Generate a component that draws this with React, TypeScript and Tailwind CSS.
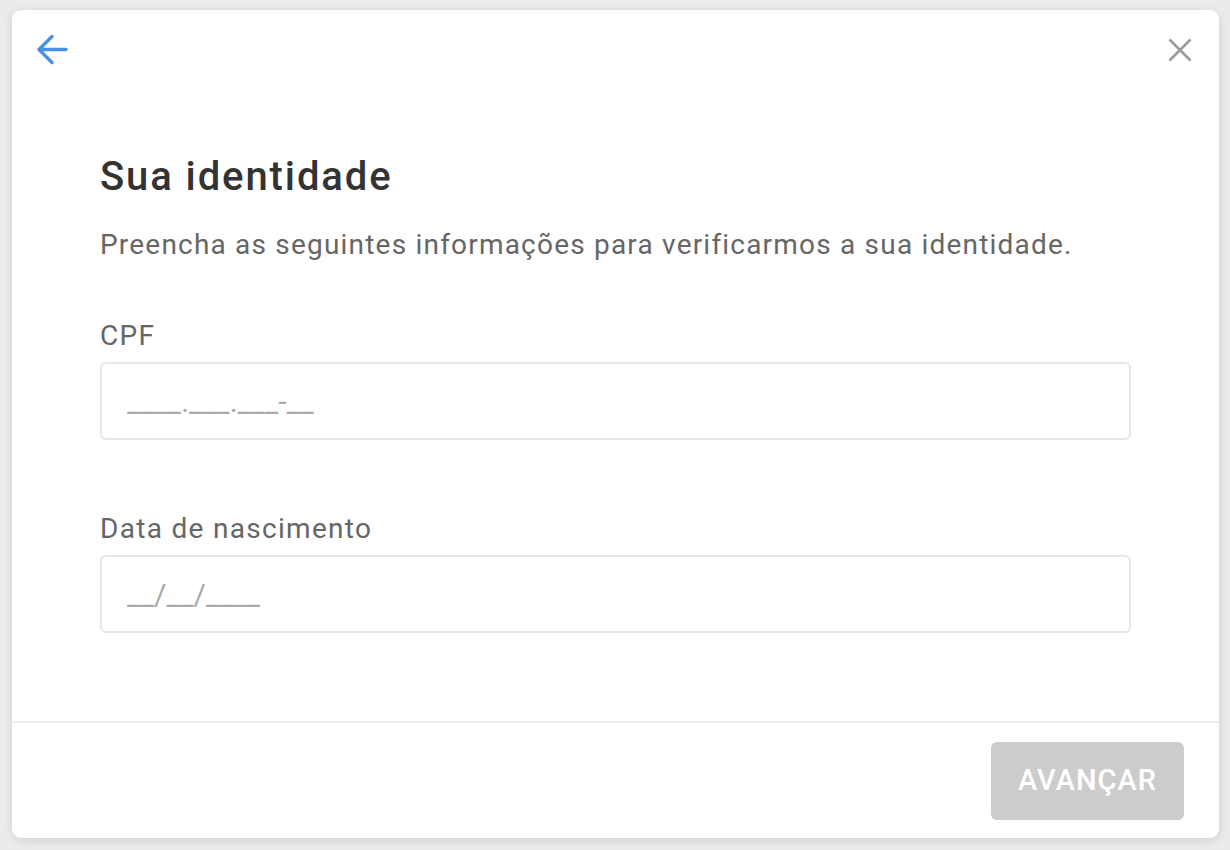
const fields = [
  { label: "CPF", placeholder: "____.___.___-__" },
  { label: "Data de nascimento", placeholder: "__/__/____" },
];

const BackArrow = () => (
  <svg width="32" height="30" viewBox="0 0 32 30" fill="none">
    <path
      d="M3 14.5H30M16 1.5L3 14.5L16 27.5"
      stroke="#4a90e2"
      strokeWidth="3.4"
      strokeLinecap="round"
      strokeLinejoin="round"
    />
  </svg>
);

const CloseIcon = () => (
  <svg width="24" height="24" viewBox="0 0 24 24" fill="none">
    <path d="M1.5 1.5L22.5 22.5M22.5 1.5L1.5 22.5" stroke="#9b9b9b" strokeWidth="2.6" />
  </svg>
);

const App = () => {
  return (
    <div className="h-[850px] w-full bg-[#ebebeb] pt-[10px] px-[12px] font-['Roboto',sans-serif]">
      <div className="w-[1207px] h-[828px] bg-white rounded-[9px] shadow-[0_2px_10px_rgba(0,0,0,0.12)] flex flex-col">
        {/* Header */}
        <div className="h-[80px] flex items-center justify-between pl-[24px] pr-[27px]">
          <button>
            <BackArrow />
          </button>
          <button>
            <CloseIcon />
          </button>
        </div>

        {/* Body */}
        <div className="flex-1 px-[88px] pt-[65px]">
          <h1 className="text-[40px] leading-[44px] font-medium tracking-[1.9px] text-[#333333]">
            Sua identidade
          </h1>
          <p className="mt-[31px] text-[28px] leading-[30px] tracking-[1.2px] text-[#666666]">
            Preencha as seguintes informações para verificarmos a sua identidade.
          </p>

          <div className="mt-[61px] flex flex-col gap-[74px]">
            {fields.map((field) => (
              <div key={field.label}>
                <label className="block text-[28px] leading-[30px] tracking-[1.3px] text-[#666666]">
                  {field.label}
                </label>
                <input
                  className="mt-[11px] w-full h-[78px] rounded-[6px] border-2 border-[#e6e6e6] px-[25px] text-[30px] text-[#333333] placeholder:text-[#aaaaaa] outline-none"
                  placeholder={field.placeholder}
                />
              </div>
            ))}
          </div>
        </div>

        {/* Footer */}
        <div className="h-[117px] border-t-2 border-[#eeeeee] flex items-center justify-end pr-[35px]">
          <button className="w-[193px] h-[78px] rounded-[6px] bg-[#cccccc] text-white text-[29px] font-medium tracking-[1px]">
            AVANÇAR
          </button>
        </div>
      </div>
    </div>
  );
};

export default App;
